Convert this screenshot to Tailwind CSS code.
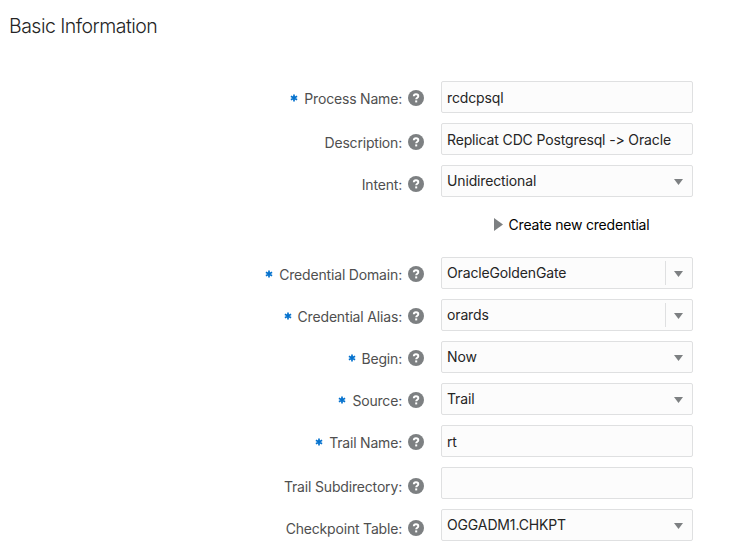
<!DOCTYPE html>
<html lang="en">
<head>
<meta charset="utf-8">
<title>Basic Information</title>
<script src="https://cdn.jsdelivr.net/npm/@tailwindcss/browser@4"></script>
</head>
<body class="h-[553px] w-[750px] overflow-hidden bg-white font-['Inter',sans-serif] text-[14px] leading-5 tracking-[-0.14px] text-[#252525] [font-feature-settings:'calt'_0]">
<svg class="hidden">
  <symbol id="help" viewBox="0 0 16 16"><circle cx="8" cy="8" r="8" fill="#7d8082"/><path d="M5.8 6.3C5.8 4.9 6.7 4.3 8 4.3s2.3.7 2.3 1.9c0 1.6-2.1 1.5-2.1 3.1" fill="none" stroke="#fff" stroke-width="1.9"/><rect x="7.2" y="10.4" width="2" height="2" fill="#fff"/></symbol>
  <symbol id="req" viewBox="0 0 8 8"><path d="M4 .5v7M.9 2.2l6.2 3.6M7.1 2.2L.9 5.8" fill="none" stroke="#0572ce" stroke-width="1.7"/></symbol>
  <symbol id="down" viewBox="0 0 9 6"><path d="M0 0h9L4.5 6z" fill="#7d8082"/></symbol>
</svg>
<h1 class="pl-[9px] pt-[12px] text-[19.5px] font-[350] leading-7 tracking-[-0.52px]">Basic Information</h1>
<main class="mt-[41px] flex flex-col gap-[10px]">
  <div class="flex h-8">
    <label class="flex h-8 w-[424px] items-center justify-end pt-[2px] tracking-[-0.19px] text-[#4f4f4f]"><svg class="mr-[6px] size-2"><use href="#req"/></svg><span class="mr-[6px] pt-[2px]">Process Name:</span><svg class="size-4"><use href="#help"/></svg></label>
    <div class="ml-[17px] flex h-8 w-[252px] items-center rounded-[2px] border border-[#dfe0e1] bg-[#fcfcfc] pl-[5px]"><span class="pt-[2px]">rcdcpsql</span></div>
  </div>
  <div class="flex h-8">
    <label class="flex h-[38px] w-[424px] shrink-0 items-center justify-end tracking-[-0.19px] text-[#4f4f4f]"><span class="mr-[6px] pt-[2px]">Description:</span><svg class="size-4"><use href="#help"/></svg></label>
    <div class="ml-[17px] flex h-8 w-[252px] items-center rounded-[2px] border border-[#dfe0e1] bg-[#fcfcfc] pl-[5px]"><span class="pt-[2px]">Replicat CDC Postgresql -&gt; Oracle</span></div>
  </div>
  <div class="flex h-8">
    <label class="flex h-[38px] w-[424px] items-center justify-end tracking-[-0.19px] text-[#4f4f4f]"><span class="mr-[6px] pt-[2px]">Intent:</span><svg class="size-4"><use href="#help"/></svg></label>
    <div class="ml-[17px] flex h-8 w-[252px] items-center justify-between rounded-[2px] border border-[#dfe0e1] bg-[#fcfcfc] pl-[5px] pr-[9px]"><span>Unidirectional</span><svg class="mt-[2px] h-[6px] w-[9px]"><use href="#down"/></svg></div>
  </div>
  <div class="flex h-10 items-center pb-[4px] pl-[494px]"><svg class="-mt-px h-[13px] w-[9px]" viewBox="0 0 9 13"><path d="M0 0l9 6.5L0 13z" fill="#7d8082"/></svg><span class="ml-[5.5px] tracking-[-0.19px] text-black">Create new credential</span></div>
  <div class="flex h-8">
    <label class="flex h-8 w-[424px] items-center justify-end pt-[2px] tracking-[-0.17px] text-[#4f4f4f]"><svg class="mr-[6px] size-2"><use href="#req"/></svg><span class="mr-[6px] pt-[2px]">Credential Domain:</span><svg class="size-4"><use href="#help"/></svg></label>
    <div class="ml-[17px] flex h-8 w-[252px] items-center rounded-[2px] border border-[#dfe0e1] bg-[#fcfcfc] pl-[5px] pr-[9px]"><span class="flex-1">OracleGoldenGate</span><i class="mr-[8px] h-6 w-px bg-[#dfe0e1]"></i><svg class="mt-[2px] h-[6px] w-[9px]"><use href="#down"/></svg></div>
  </div>
  <div class="flex h-8">
    <label class="flex h-8 w-[424px] items-center justify-end pt-[2px] tracking-[-0.17px] text-[#4f4f4f]"><svg class="mr-[6px] size-2"><use href="#req"/></svg><span class="mr-[6px] pt-[2px]">Credential Alias:</span><svg class="size-4"><use href="#help"/></svg></label>
    <div class="ml-[17px] flex h-8 w-[252px] items-center rounded-[2px] border border-[#dfe0e1] bg-[#fcfcfc] pl-[5px] pr-[9px]"><span class="flex-1">orards</span><i class="mr-[8px] h-6 w-px bg-[#dfe0e1]"></i><svg class="mt-[2px] h-[6px] w-[9px]"><use href="#down"/></svg></div>
  </div>
  <div class="flex h-8">
    <label class="flex h-8 w-[424px] items-center justify-end pt-[2px] tracking-[-0.19px] text-[#4f4f4f]"><svg class="mr-[6px] size-2"><use href="#req"/></svg><span class="mr-[6px] pt-[2px]">Begin:</span><svg class="size-4"><use href="#help"/></svg></label>
    <div class="ml-[17px] flex h-8 w-[252px] items-center justify-between rounded-[2px] border border-[#dfe0e1] bg-[#fcfcfc] pl-[5px] pr-[9px]"><span>Now</span><svg class="mt-[2px] h-[6px] w-[9px]"><use href="#down"/></svg></div>
  </div>
  <div class="flex h-8">
    <label class="flex h-8 w-[424px] items-center justify-end pt-[2px] tracking-[-0.19px] text-[#4f4f4f]"><svg class="mr-[6px] size-2"><use href="#req"/></svg><span class="mr-[6px] pt-[2px]">Source:</span><svg class="size-4"><use href="#help"/></svg></label>
    <div class="ml-[17px] flex h-8 w-[252px] items-center justify-between rounded-[2px] border border-[#dfe0e1] bg-[#fcfcfc] pl-[5px] pr-[9px]"><span>Trail</span><svg class="mt-[2px] h-[6px] w-[9px]"><use href="#down"/></svg></div>
  </div>
  <div class="flex h-8">
    <label class="flex h-8 w-[424px] items-center justify-end pt-[2px] tracking-[-0.19px] text-[#4f4f4f]"><svg class="mr-[6px] size-2"><use href="#req"/></svg><span class="mr-[6px] pt-[2px]">Trail Name:</span><svg class="size-4"><use href="#help"/></svg></label>
    <div class="ml-[17px] flex h-8 w-[252px] items-center rounded-[2px] border border-[#dfe0e1] bg-[#fcfcfc] pl-[5px]"><span class="pt-[2px]">rt</span></div>
  </div>
  <div class="flex h-8">
    <label class="flex h-[38px] w-[424px] items-center justify-end tracking-[-0.17px] text-[#4f4f4f]"><span class="mr-[6px] pt-[2px]">Trail Subdirectory:</span><svg class="size-4"><use href="#help"/></svg></label>
    <div class="ml-[17px] h-8 w-[252px] rounded-[2px] border border-[#dfe0e1] bg-[#fcfcfc]"></div>
  </div>
  <div class="flex h-8">
    <label class="flex h-[38px] w-[424px] items-center justify-end tracking-[-0.19px] text-[#4f4f4f]"><span class="mr-[6px] pt-[2px]">Checkpoint Table:</span><svg class="size-4"><use href="#help"/></svg></label>
    <div class="ml-[17px] flex h-8 w-[252px] items-center justify-between rounded-[2px] border border-[#dfe0e1] bg-[#fcfcfc] pl-[5px] pr-[9px]"><span>OGGADM1.CHKPT</span><svg class="mt-[2px] h-[6px] w-[9px]"><use href="#down"/></svg></div>
  </div>
</main>
</body>
</html>
